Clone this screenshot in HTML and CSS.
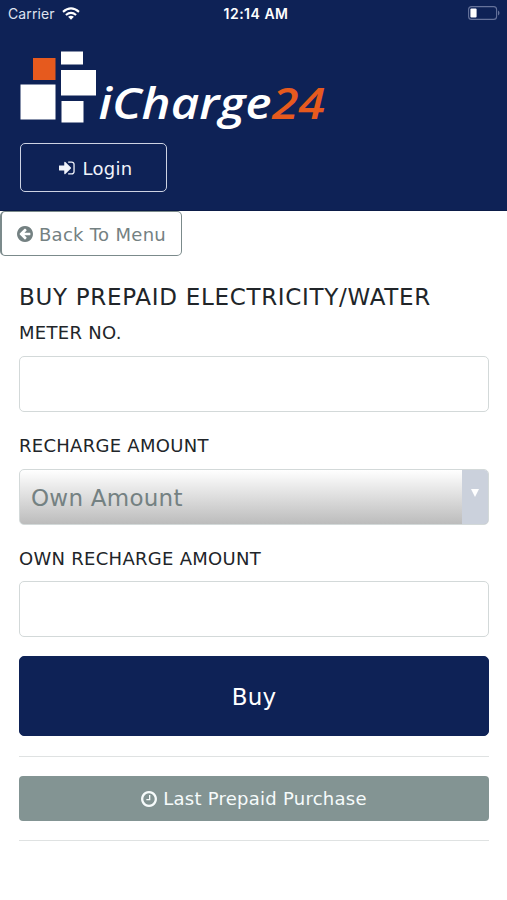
FILE: index.html
```html
<!DOCTYPE html>
<html lang="en">
<head>
<meta charset="utf-8">
<title>iCharge24</title>
<link rel="stylesheet" href="styles.css">
</head>
<body>
<header class="header">
  <div class="status">
    <span class="carrier">Carrier
      <svg class="wifi" viewBox="0 0 18 13"><g fill="none" stroke="#fff" stroke-width="2.1"><path d="M1 4.9Q9-2 17 4.9"/><path d="M3.9 8Q9 3.6 14.1 8"/></g><path fill="#fff" d="M6.1 9.8Q9 7.6 11.900 9.800L9 12.800Z"/></svg>
    </span>
    <span class="time">12:14 AM</span>
    <svg class="battery" viewBox="0 0 32 14"><rect x=".6" y=".6" width="28" height="12.800" rx="3" fill="none" stroke="#66739b" stroke-width="1.100"/><rect x="2.400" y="2.400" width="6.200" height="9.200" rx="1" fill="#fff"/><path d="M30 4.500q1.500.8 1.500 2.500T30 9.500z" fill="#66739b"/></svg>
  </div>
  <svg class="logo" viewBox="0 0 310 80">
    <g fill="#fff"><rect x="41" y="1.500" width="22" height="13"/><rect x="41" y="20" width="35" height="25.500"/><rect x="0.500" y="34.500" width="35" height="35"/><rect x="41.500" y="51" width="22" height="21.500"/></g>
    <rect x="13" y="8" width="22.500" height="22" fill="#e65a1e"/>
    <text x="78.500" y="68.500" textLength="173" lengthAdjust="spacingAndGlyphs" fill="#fff">iCharge</text>
    <text class="logo-num" x="252" y="68.500" textLength="53" lengthAdjust="spacingAndGlyphs" fill="#e65a1e">24</text>
  </svg>
  <button class="login"><svg class="icon" viewBox="0 128 1664 1536"><path d="M1184 896q0 26-19 45l-544 544q-19 19-45 19t-45-19-19-45v-288h-448q-26 0-45-19t-19-45v-384q0-26 19-45t45-19h448v-288q0-26 19-45t45-19 45 19l544 544q19 19 19 45zm352-352v704q0 119-84.500 203.500t-203.500 84.500h-320q-13 0-22.500-9.500t-9.500-22.500q0-4-1-20t-.5-26.500 3-23.500 10-19.500 20.500-6.500h320q66 0 113-47t47-113v-704q0-66-47-113t-113-47h-312l-11.500-1-11.500-3-8-5.500-7-9-2-13.500q0-4-1-20t-.5-26.500 3-23.500 10-19.500 20.500-6.500h320q119 0 203.500 84.500t84.500 203.500z"/></svg><span>Login</span></button>
</header>
<button class="back"><svg class="icon" viewBox="128 128 1536 1536"><path d="M1408 960v-128q0-26-19-45t-45-19h-502l189-189q19-19 19-45t-19-45l-91-91q-18-18-45-18t-45 18l-362 362-91 91q-18 18-18 45t18 45l91 91 362 362q18 18 45 18t45-18l91-91q18-18 18-45t-18-45l-189-189h502q26 0 45-19t19-45zm256-64q0 209-103 385.500t-279.500 279.500-385.500 103-385.500-103-279.500-279.500-103-385.500 103-385.500 279.500-279.500 385.500-103 385.500 103 279.500 279.500 103 385.500z"/></svg><span>Back To Menu</span></button>
<main class="form">
  <h1>BUY PREPAID ELECTRICITY/WATER</h1>
  <label class="l-meter" for="meter">METER NO.</label>
  <input id="meter" class="field">
  <label class="l-amount">RECHARGE AMOUNT</label>
  <div class="field select"><span>Own Amount</span><i class="drop"></i></div>
  <label class="l-own" for="own">OWN RECHARGE AMOUNT</label>
  <input id="own" class="field">
  <button class="buy"><span>Buy</span></button>
  <hr>
  <button class="last"><svg class="icon" viewBox="128 128 1536 1536"><path d="M1024 544v448q0 14-9 23t-23 9h-320q-14 0-23-9t-9-23v-64q0-14 9-23t23-9h224v-352q0-14 9-23t23-9h64q14 0 23 9t9 23zm416 352q0-148-73-273t-198-198-273-73-273 73-198 198-73 273 73 273 198 198 273 73 273-73 198-198 73-273zm224 0q0 209-103 385.500t-279.500 279.500-385.500 103-385.500-103-279.500-279.500-103-385.500 103-385.500 279.500-279.500 385.500-103 385.500 103 279.500 279.500 103 385.500z"/></svg><span>Last Prepaid Purchase</span></button>
  <hr>
</main>
</body>
</html>
```
FILE: styles.css
```css
* { box-sizing: border-box; }
body { margin: 0; background: #fff; color: #212529; font-family: "DejaVu Sans", sans-serif; }
button { font-family: inherit; padding: 0; margin: 0; display: flex; align-items: center; justify-content: center; gap: 6px; border-radius: 5px; letter-spacing: 0.25px; }
svg { display: block; }
.icon { fill: currentColor; flex: none; width: 16px; height: 16px; }
.header { height: 211px; background: #0e2256; color: #fff; border-bottom: 1px solid #0b1b48; }
.status { height: 28px; padding: 0 7px 0 8px; display: grid; grid-template-columns: 1fr auto 1fr; align-items: center; font: 14px Inter, sans-serif; }
.carrier { display: flex; align-items: center; gap: 7px; color: #dfe3f0; letter-spacing: 0.1px; margin-top: -1px; }
.wifi { width: 18px; height: 13px; }
.time { font-weight: 600; font-size: 14px; letter-spacing: 0.5px; margin: -1px -4px 0 0; }
.battery { width: 32px; height: 14px; justify-self: end; margin-top: -2px; }
.logo { width: 310px; height: 80px; margin: 22px 0 0 20px; font: italic 600 43px "Open Sans", sans-serif; stroke-width: 0.6px; }
.logo-num { font-size: 44px; }
.login { width: 147px; height: 49px; margin: 13px 0 0 20px; border: 1.500px solid #cdd3e3; background: transparent; color: #f0f3fa; font-size: 18px; padding: 1px 0 0 5px; }
.login .icon { width: 17px; height: 16px; }
.login span { letter-spacing: 0.3px; }
.back { width: 182px; height: 45px; border: 1px solid #7b8a8b; border-left-width: 2px; background: #fff; color: #748182; font-size: 18px; padding-top: 1px; }
.back span { letter-spacing: 0.3px; margin-right: -1px; }
.back .icon { margin-left: -1px; }
.form { padding: 27px 18px 0 19px; display: flex; flex-direction: column; }
h1 { margin: 0; font-size: 23px; line-height: 29px; font-weight: 400; white-space: nowrap; letter-spacing: 0.7px; }
label { font-size: 18px; line-height: 24px; margin-top: 22px; white-space: nowrap; align-self: flex-start; letter-spacing: 0.28px; }
.l-meter { margin-top: 9px; }
.field { width: 100%; height: 56px; margin-top: 11px; border: 1.500px solid #d3d9d9; border-radius: 5px; background: #fff; padding: 0; }
.select { display: flex; align-items: stretch; overflow: hidden; color: #748182; font-size: 23px; letter-spacing: 0.25px; background: linear-gradient(#fff, #bcbcbc); }
.l-own + .field { margin-top: 10px; }
.select span { flex: 1; padding-left: 11px; line-height: 56px; }
.drop { width: 26px; background: #cbd1dc; display: flex; justify-content: center; padding-top: 19px; }
.drop::before { content: ""; width: 0; height: 0; border: 4.500px solid transparent; border-top: 8px solid #fff; border-bottom: 0; }
.buy { height: 80px; margin-top: 19px; border: 1px solid #0e2256; background: #0e2256; color: #fff; font-size: 23px; padding-top: 2px; }
hr { width: 100%; height: 1px; margin: 20px 0 19px; border: 0; background: #dfe2e2; }
.last { height: 45px; border: 0; background: #839493; color: #f6fbfb; font-size: 18px; border-radius: 4px; }
.last + hr { margin-top: 19px; }
```
